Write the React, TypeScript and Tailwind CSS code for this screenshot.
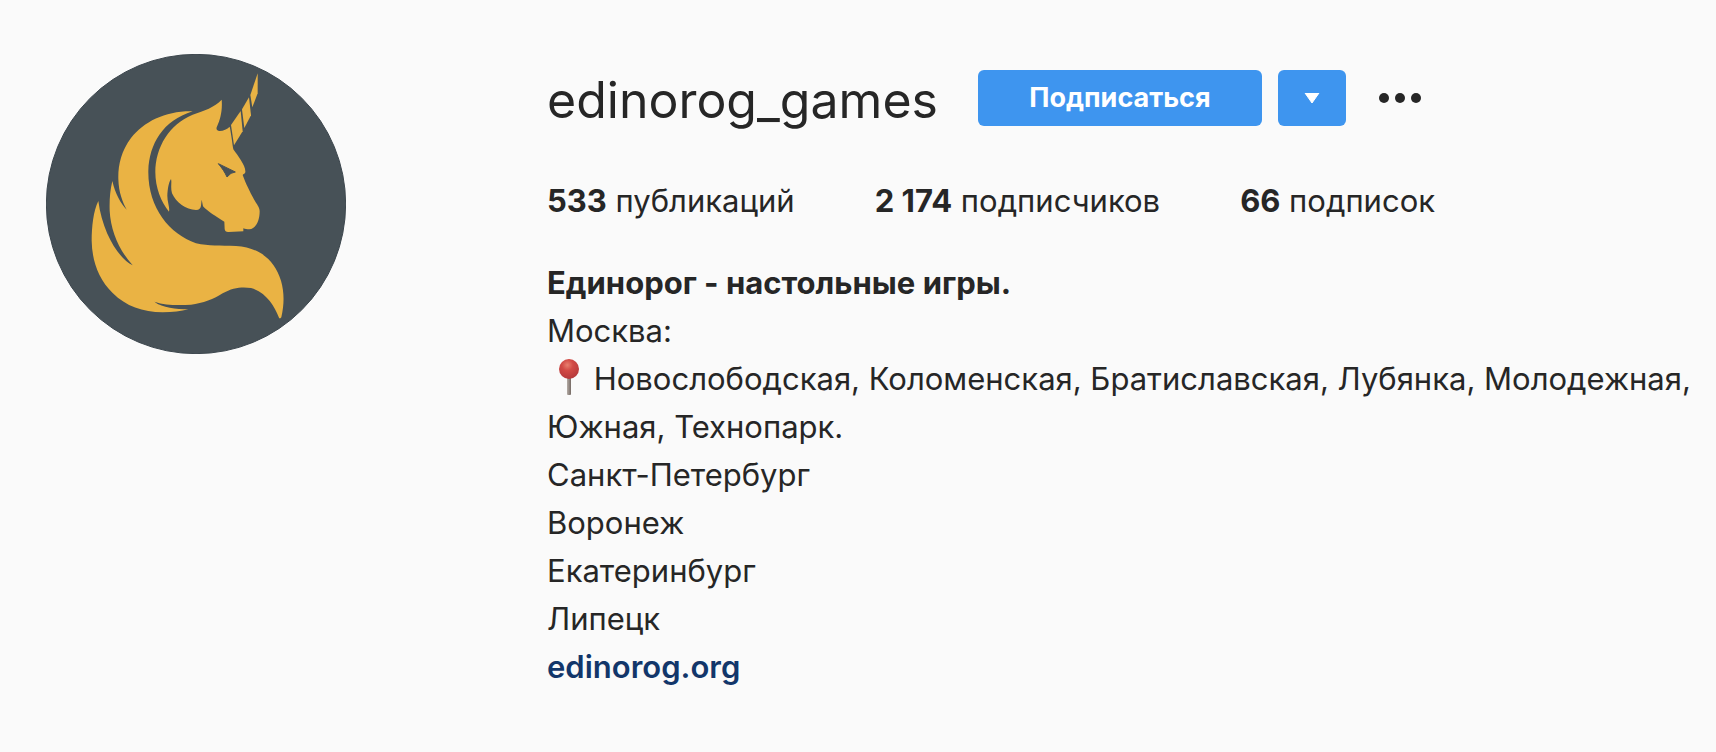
const stats = [
  { value: '533', label: 'публикаций' },
  { value: '2 174', label: 'подписчиков' },
  { value: '66', label: 'подписок' }
]

const cities = ['Санкт-Петербург', 'Воронеж', 'Екатеринбург', 'Липецк']

function Avatar() {
  return (
    <svg viewBox="30 30 900 900" className="w-[300px] h-[300px] shrink-0" role="img" aria-label="edinorog_games">
      <circle cx="480" cy="480" r="449" fill="#475157" stroke="#3d474e" strokeWidth="3" />
      <g fill="#eab344">
        {/* mane and tail */}
        <path d="M470 202C390 200 325 232 285 282C255 322 246 365 247 405C248 445 260 475 272 497C255 480 238 450 229 411C222 440 220 470 221 500C224 560 250 620 290 664C250 645 200 570 187 471C172 500 167 550 167 590C168 650 187 705 230 747C270 787 320 804 380 805C410 805 435 802 457 796C420 795 380 792 355 773C390 785 430 784 465 782C500 778 535 765 560 748C590 730 620 728 645 732C690 745 715 785 729 821Q732 826 736 820C745 780 745 745 735 710C716 648 670 610 600 606C550 604 520 607 480 598C400 570 335 490 337 380C340 300 380 230 470 202Z" />
        {/* head */}
        <path d="M557 167C535 190 505 200 470 212C400 240 358 310 358 385C358 430 375 475 399 503C402 490 394 475 394 455C395 435 398 415 405 405C408 415 403 430 408 448C420 475 450 498 480 498C490 497 494 493 495 485L497 467L501 487C515 502 540 518 565 533L566 555Q567 565 578 564L622 562L622 553C628 555 632 556 640 556C660 554 671 530 671 502C671 490 662 480 655 468C640 440 630 420 620 393C622 389 627 391 628 385C630 365 605 335 592 316C589 300 586 270 581 248C573 256 560 262 549 261C540 259 540 252 544 245C552 228 560 200 557 167Z" />
        {/* horn */}
        <path d="M585 243L614 201L620 262L594 304Z" />
        <path d="M618 196L639 160L645 214L625 252Z" />
        <path d="M643 153L665 88L665 148L649 190Z" />
      </g>
      <path d="M547 359L598 384L585 388L573 399C567 385 558 372 547 359Z" fill="#475157" stroke="#475157" strokeWidth="3" />
    </svg>
  )
}

function Pin() {
  return (
    <svg viewBox="0 0 38 48" className="inline-block w-[38px] h-12 align-bottom" aria-hidden="true">
      <defs>
        <radialGradient id="pin-head" cx="0.42" cy="0.3" r="0.7">
          <stop offset="0" stopColor="#e8806f" />
          <stop offset="0.4" stopColor="#d24a45" />
          <stop offset="1" stopColor="#b5393b" />
        </radialGradient>
        <linearGradient id="pin-needle">
          <stop offset="0" stopColor="#b5aca6" />
          <stop offset="1" stopColor="#756a64" />
        </linearGradient>
      </defs>
      <rect x="20" y="22" width="4" height="18" rx="1" fill="url(#pin-needle)" />
      <circle cx="22" cy="14" r="10" fill="url(#pin-head)" />
    </svg>
  )
}

function App() {
  return (
    <main className="flex items-start pt-[54px] pb-[60px] pl-[46px] pr-5 min-h-screen bg-[#fafafa] text-[#262626] font-['Inter',sans-serif] text-[31px] leading-[48px]">
      <Avatar />

      <section className="flex-1 min-w-0 ml-[201px] pt-4">
        <header className="flex items-center h-14">
          <h1 className="pt-1 text-[50px] font-normal">edinorog_games</h1>
          <button className="ml-10 w-[284px] h-14 rounded-md bg-[#3e95ef] text-white text-[27px] font-bold">
            Подписаться
          </button>
          <button aria-label="Похожие аккаунты" className="flex items-center justify-center ml-4 w-[68px] h-14 rounded-md bg-[#3e95ef]">
            <svg viewBox="0 0 16 10" className="w-4 h-[10px]">
              <path d="M1 0H15L8 10Z" fill="#fff" stroke="#fff" strokeLinejoin="round" />
            </svg>
          </button>
          <button aria-label="Параметры" className="ml-8">
            <svg viewBox="0 0 44 12" className="w-11 h-3" fill="#262626">
              <circle cx="6" cy="6" r="5" />
              <circle cx="22" cy="6" r="5" />
              <circle cx="38" cy="6" r="5" />
            </svg>
          </button>
        </header>

        <ul className="flex gap-20 mt-[51px]">
          {stats.map((stat) => (
            <li key={stat.label}>
              <span className="font-bold">{stat.value}</span> {stat.label}
            </li>
          ))}
        </ul>

        <div className="mt-[34px]">
          <h2 className="font-bold">Единорог - настольные игры.</h2>
          <p>Москва:</p>
          <p>
            <Pin /> Новослободская, Коломенская, Братиславская, Лубянка, Молодежная, Южная, Технопарк.
          </p>
          {cities.map((city) => (
            <p key={city}>{city}</p>
          ))}
          <a href="#" className="font-semibold text-[#12366a]">
            edinorog.org
          </a>
        </div>
      </section>
    </main>
  )
}

export default App
